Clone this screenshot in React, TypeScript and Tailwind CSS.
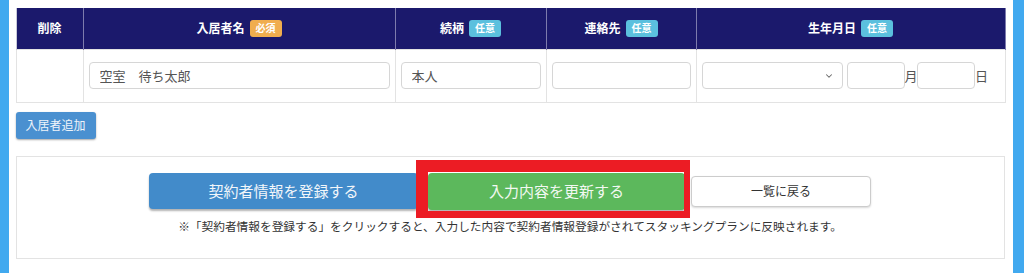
import { ChevronDown } from "lucide-react";

const font = "font-['Noto_Sans_CJK_JP','Noto_Sans',sans-serif]";

function Badge({ kind }: { kind: "req" | "opt" }) {
  return (
    <span
      className={`ml-[5px] inline-flex h-[17px] w-[32px] items-center justify-center rounded-[3px] text-[10px] font-bold leading-none text-white ${
        kind === "req" ? "bg-[#f0ad4e]" : "bg-[#5bc0de]"
      }`}
    >
      {kind === "req" ? "必須" : "任意"}
    </span>
  );
}

function Head({ label, badge }: { label: string; badge?: "req" | "opt" }) {
  return (
    <th className="h-[41px] border-x border-[#7d7bad] p-0 align-middle text-[12px] font-bold text-white first:border-l-[#c9c9d9]">
      <span className="inline-flex items-center">
        {label}
        {badge && <Badge kind={badge} />}
      </span>
    </th>
  );
}

const input =
  "h-[27px] rounded-[4px] border border-[#d6d6d6] bg-white px-[10px] text-[13px] text-[#555] outline-none";

export default function App() {
  return (
    <div className={`flex h-[273px] w-[1024px] bg-white ${font}`}>
      <div className="w-[9px] bg-[#41a9ef]" />
      <div className="flex-1 px-[7px] pt-[8px]">
        <table className="w-[989px] table-fixed border-collapse">
          <colgroup>
            <col className="w-[67px]" />
            <col className="w-[312px]" />
            <col className="w-[151px]" />
            <col className="w-[150px]" />
            <col className="w-[309px]" />
          </colgroup>
          <thead className="bg-[#1b196c]">
            <tr>
              <Head label="削除" />
              <Head label="入居者名" badge="req" />
              <Head label="続柄" badge="opt" />
              <Head label="連絡先" badge="opt" />
              <Head label="生年月日" badge="opt" />
            </tr>
          </thead>
          <tbody>
            <tr className="h-[53px]">
              <td className="border border-[#e3e3e3]" />
              <td className="border border-[#e3e3e3] px-[5px]">
                <input className={`${input} w-full`} defaultValue="空室　待ち太郎" />
              </td>
              <td className="border border-[#e3e3e3] px-[5px]">
                <input className={`${input} w-full`} defaultValue="本人" />
              </td>
              <td className="border border-[#e3e3e3] px-[5px]">
                <input className={`${input} w-full`} />
              </td>
              <td className="border border-[#e3e3e3] px-[5px]">
                <div className="flex items-center text-[13px] text-[#555]">
                  <div className={`${input} flex w-[141px] items-center justify-end pr-[8px]`}>
                    <ChevronDown className="h-[10px] w-[10px] text-[#666]" strokeWidth={2.5} />
                  </div>
                  <input className={`${input} ml-[4px] w-[58px]`} />
                  <span className="w-[12px] text-center">月</span>
                  <input className={`${input} w-[58px]`} />
                  <span className="w-[14px] text-center">日</span>
                </div>
              </td>
            </tr>
          </tbody>
        </table>

        <button
          type="button"
          className="mt-[9px] h-[27px] w-[80px] rounded-[3px] bg-[#4a90d0] text-[12px] text-[#eef4fa] shadow-[0_1px_2px_rgba(0,0,0,0.35)]"
        >
          入居者追加
        </button>

        <div className="mt-[17px] w-[989px] border border-[#e3e3e3] pb-[23px] pt-[16px]">
          <div className="flex h-[37px] items-center justify-center">
            <button
              type="button"
              className="h-[36px] w-[269px] rounded-[4px] bg-[#428bca] text-[15px] text-[#f2f6fa] shadow-[0_2px_2px_rgba(0,0,0,0.3)]"
            >
              契約者情報を登録する
            </button>
            <span className="relative ml-[10px]">
              <button
                type="button"
                className="h-[37px] w-[257px] rounded-[4px] bg-[#5cb85c] text-[15px] text-[#f2f8f2] shadow-[0_2px_2px_rgba(0,0,0,0.3)]"
              >
                入力内容を更新する
              </button>
              <span className="pointer-events-none absolute -bottom-[8px] -left-[12px] -right-[5px] -top-[13px] border-b-[7px] border-l-[12px] border-r-[6px] border-t-[12px] border-[#ec1c24]" />
            </span>
            <button
              type="button"
              className="ml-[6px] h-[31px] w-[180px] rounded-[4px] border border-[#cccccc] bg-white text-[12px] text-[#333] shadow-[0_1px_2px_rgba(0,0,0,0.15)]"
            >
              一覧に戻る
            </button>
          </div>
          <p className="mt-[7px] text-center text-[11.7px] leading-[18px] text-[#333]">
            ※「契約者情報を登録する」をクリックすると、入力した内容で契約者情報登録がされてスタッキングプランに反映されます。
          </p>
        </div>
      </div>
      <div className="w-[12px] bg-[#41a9ef]" />
    </div>
  );
}
